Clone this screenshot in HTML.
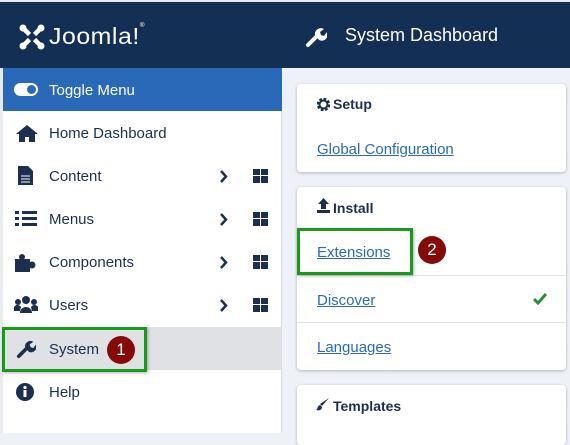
<!DOCTYPE html><html><head><style>
*{margin:0;padding:0;box-sizing:border-box}
body{width:570px;height:433px;overflow:hidden;background:#eef2f8;font-family:"Liberation Sans",Arial,sans-serif;position:relative}
.abs{position:absolute}
.hdr{left:0;top:0;width:570px;height:68px;background:#132f53;border-top:2px solid #e8ecef}
.side{left:3px;top:68px;width:279px;height:365px;background:#fff;border-right:1px solid #d8dde6}
.row{position:absolute;left:0;width:279px;height:43px;color:#1c2f4f;font-size:15px}
.row span.t{position:absolute;left:46px;top:14px}
.row svg{position:absolute}
.grid{position:absolute;left:250px;top:15px;width:15px;height:14px;background:
linear-gradient(#1c2f4f,#1c2f4f) 0 0/7px 6px no-repeat,linear-gradient(#1c2f4f,#1c2f4f) 8px 0/7px 6px no-repeat,linear-gradient(#1c2f4f,#1c2f4f) 0 7px/7px 7px no-repeat,linear-gradient(#1c2f4f,#1c2f4f) 8px 7px/7px 7px no-repeat}
.card{position:absolute;left:297px;width:269px;background:#fff;border-radius:4px;box-shadow:0 1px 3px rgba(0,0,0,.25)}
.ch{position:absolute;left:20px;font-weight:bold;font-size:15px;color:#1c2f4f}
a{position:absolute;left:20px;color:#2a69b8;text-decoration:underline;font-size:15px}
.sep{position:absolute;left:0;width:269px;border-top:1px solid #dfe3e8}
.gb{position:absolute;border:3px solid #1a9a1a;box-shadow:1px 1px 3px rgba(0,0,0,.3)}
.num{position:absolute;width:28px;height:28px;border-radius:50%;background:#850b0b;color:#fff;font-size:17px;text-align:center;line-height:28px}
</style></head><body>
<div class="abs hdr">
<svg class="abs" style="left:19px;top:22px" width="26" height="26" viewBox="0 0 26 26" fill="#fff"><circle cx="4" cy="4" r="3.5"/><circle cx="22" cy="4" r="3.5"/><circle cx="4" cy="22" r="3.5"/><circle cx="22" cy="22" r="3.5"/><path d="M5 5L21 21M21 5L5 21" stroke="#fff" stroke-width="4.5"/><path d="M8 13L13 8L18 13L13 18Z" fill="#132f53"/></svg>
<div class="abs" style="left:49px;top:21px;color:#fff;font-size:23px;font-weight:300;letter-spacing:0.5px;transform:scaleX(1.08);transform-origin:left">Joomla!<span style="font-size:6px;vertical-align:top">®</span></div>
<svg class="abs" style="left:305px;top:24px" width="22" height="22" viewBox="0 0 22 22"><path d="M3 19L11 11" stroke="#fff" stroke-width="4" stroke-linecap="round"/><path d="M10 9a6 6 0 0 1 9-6l-4 3 1 3 3 1 3-4a6 6 0 0 1-8 8z" fill="#fff"/></svg>
<div class="abs" style="left:345px;top:23px;color:#fff;font-size:18px">System Dashboard</div>
</div>
<div class="abs" style="left:0;top:68px;width:3px;height:365px;background:#e9ecef"></div>
<div class="abs side">
<div class="row" style="top:0;background:#2a69b8;color:#fff"><div class="abs" style="left:11px;top:15px;width:24px;height:13px;border-radius:7px;background:#fff"></div><div class="abs" style="left:24px;top:17px;width:9px;height:9px;border-radius:50%;background:#2a69b8"></div><span class="t">Toggle Menu</span></div>
<div class="row" style="top:43px"><svg style="left:12px;top:13px" width="24" height="18" viewBox="0 0 24 18"><path d="M12 1L1 10h3v8h6v-5h4v5h6v-8h3z" fill="#1c2f4f"/></svg><span class="t">Home Dashboard</span></div>
<div class="row" style="top:86px"><svg style="left:15px;top:12px" width="15" height="19"><path d="M0 0h10l5 5v14H0z" fill="#1c2f4f"/><path d="M3 10h9M3 13h9M3 16h9" stroke="#fff"/></svg><span class="t">Content</span><svg style="left:216px;top:16px" width="9" height="13"><path d="M2 1l5 5.5L2 12" stroke="#1c2f4f" stroke-width="2.5" fill="none"/></svg><div class="grid"></div></div>
<div class="row" style="top:129px"><svg style="left:12px;top:14px" width="22" height="16"><g fill="#1c2f4f"><rect x="0" y="0" width="4" height="3"/><rect x="0" y="6" width="4" height="3"/><rect x="0" y="12" width="4" height="3"/><rect x="7" y="0" width="15" height="3"/><rect x="7" y="6" width="15" height="3"/><rect x="7" y="12" width="15" height="3"/></g></svg><span class="t">Menus</span><svg style="left:216px;top:16px" width="9" height="13"><path d="M2 1l5 5.5L2 12" stroke="#1c2f4f" stroke-width="2.5" fill="none"/></svg><div class="grid"></div></div>
<div class="row" style="top:172px"><svg style="left:12px;top:12px" width="22" height="20"><g fill="#1c2f4f"><rect x="0" y="7" width="15" height="13"/><circle cx="7" cy="5" r="3"/><circle cx="17" cy="13" r="3.5"/></g></svg><span class="t">Components</span><svg style="left:216px;top:16px" width="9" height="13"><path d="M2 1l5 5.5L2 12" stroke="#1c2f4f" stroke-width="2.5" fill="none"/></svg><div class="grid"></div></div>
<div class="row" style="top:215px"><svg style="left:11px;top:13px" width="24" height="18"><g fill="#1c2f4f"><circle cx="12" cy="4" r="4"/><circle cx="4" cy="6" r="3"/><circle cx="20" cy="6" r="3"/><path d="M6 17a6 6 0 0 1 12 0z"/><path d="M0 15a4 4 0 0 1 7-4l-1 4z"/><path d="M24 15a4 4 0 0 0-7-4l1 4z"/></g></svg><span class="t">Users</span><svg style="left:216px;top:16px" width="9" height="13"><path d="M2 1l5 5.5L2 12" stroke="#1c2f4f" stroke-width="2.5" fill="none"/></svg><div class="grid"></div></div>
<div class="row" style="top:259px;background:#dfe1e5"><svg style="left:13px;top:12px" width="20" height="20" viewBox="0 0 22 22"><path d="M3 19L11 11" stroke="#1c2f4f" stroke-width="4" stroke-linecap="round"/><path d="M10 9a6 6 0 0 1 9-6l-4 3 1 3 3 1 3-4a6 6 0 0 1-8 8z" fill="#1c2f4f"/></svg><span class="t">System</span></div>
<div class="row" style="top:302px"><svg style="left:13px;top:13px" width="18" height="18"><circle cx="9" cy="9" r="9" fill="#1c2f4f"/><rect x="7.5" y="7" width="3" height="7" fill="#fff"/><circle cx="9" cy="4.5" r="1.6" fill="#fff"/></svg><span class="t">Help</span></div>
</div>
<div class="card" style="top:84px;height:88px"><svg class="abs" style="left:20px;top:14px" width="13" height="13"><circle cx="6.5" cy="6.5" r="5" fill="none" stroke="#1c2f4f" stroke-width="3.5" stroke-dasharray="2.5 1.4"/><circle cx="6.5" cy="6.5" r="4" fill="none" stroke="#1c2f4f" stroke-width="2"/></svg><div class="ch" style="left:36px;top:12px;font-size:14px">Setup</div><a style="top:57px">Global Configuration</a></div>
<div class="card" style="top:187px;height:183px"><svg class="abs" style="left:20px;top:11px" width="13" height="15"><path d="M6.5 0L12 6H9v5H4V6H1z" fill="#1c2f4f"/><rect x="0" y="12" width="13" height="3" fill="#1c2f4f"/></svg><div class="ch" style="left:36px;top:13px;font-size:14px">Install</div>
<a style="top:57px">Extensions</a><div class="sep" style="top:88px"></div>
<a style="top:105px">Discover</a><svg class="abs" style="left:236px;top:106px" width="14" height="12"><path d="M1 6l4 4 8-9" stroke="#2e8b3a" stroke-width="3" fill="none"/></svg><div class="sep" style="top:135px"></div>
<a style="top:152px">Languages</a></div>
<div class="card" style="top:385px;height:60px"><svg class="abs" style="left:19px;top:12px" width="14" height="14"><path d="M13 1L6 9 4 7z" fill="#1c2f4f"/><path d="M4 8l2 2c0 3-3 4-6 3 2-1 1-4 4-5z" fill="#1c2f4f"/></svg><div class="ch" style="left:36px;top:13px;font-size:14px">Templates</div></div>
<div class="gb" style="left:2px;top:327px;width:145px;height:45px"></div>
<div class="num" style="left:107px;top:336px">1</div>
<div class="gb" style="left:297px;top:228px;width:116px;height:47px"></div>
<div class="num" style="left:418px;top:236px">2</div>
</body></html>
